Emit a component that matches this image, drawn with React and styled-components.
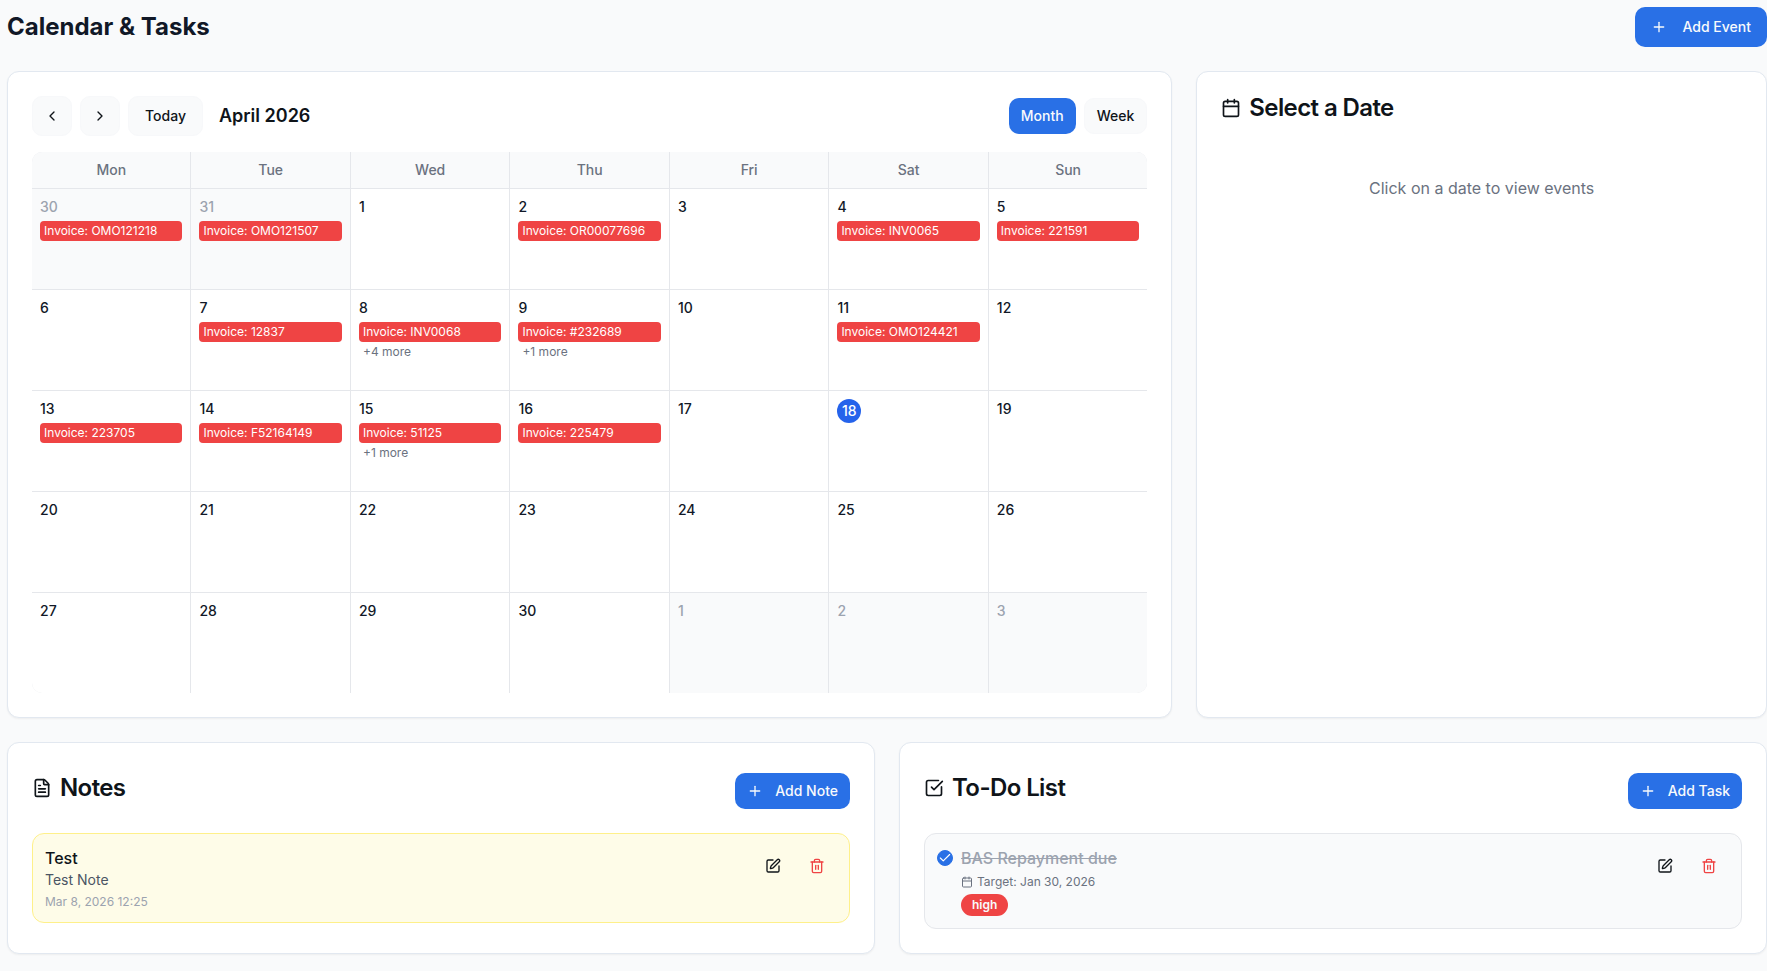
import { Calendar, ChevronLeft, ChevronRight, FileText, Plus, SquareCheckBig, SquarePen, Trash2 } from "lucide-react";
import { useState } from "react";
import styled, { createGlobalStyle } from "styled-components";

const GlobalStyle = createGlobalStyle`
  *, *::before, *::after {
    box-sizing: border-box;
  }
  body {
    margin: 0;
    background-color: #f9fafb;
    color: #0f1419;
    font-family: Inter, "Liberation Sans", sans-serif;
    font-size: 16px;
    line-height: 24px;
  }
  h1, h2, h3, p {
    margin: 0;
  }
`;

const Page = styled.main`
  display: flex;
  flex-direction: column;
  gap: 24px;
  padding: 7px 0 16px 7px;
`;
const Header = styled.header`
  display: flex;
  align-items: center;
  justify-content: space-between;
`;
const PageTitle = styled.h1`
  color: #111827;
  font-size: 24px;
  font-weight: 700;
  line-height: 32px;
`;
const Button = styled.button`
  display: inline-flex;
  align-items: center;
  justify-content: center;
  gap: ${(props) => (props.$small ? "12px" : "16px")};
  height: ${(props) => (props.$small ? "36px" : "40px")};
  padding: 0 ${(props) => (props.$small ? "12px" : "16px")};
  border: ${(props) => (props.$primary ? "none" : "1px solid #f7f8fa")};
  border-radius: 10px;
  background-color: ${(props) => (props.$primary ? "#2970e6" : "#f9fafb")};
  color: ${(props) => (props.$primary ? "#f8fafc" : "#0f1419")};
  font-family: inherit;
  font-size: 14px;
  font-weight: 500;
  line-height: 20px;
  white-space: nowrap;
  cursor: pointer;
`;
const SquareButton = styled(Button)`
  width: 40px;
  padding: 0;
`;
const IconButton = styled.button`
  display: flex;
  align-items: center;
  justify-content: center;
  width: 40px;
  height: 40px;
  padding: 0;
  border: none;
  background: transparent;
  color: ${(props) => (props.$danger ? "#ef4444" : "#0f1419")};
  cursor: pointer;
`;

const TopGrid = styled.div`
  display: grid;
  grid-template-columns: repeat(3, minmax(0, 1fr));
  gap: 24px;
`;
const BottomGrid = styled.div`
  display: grid;
  grid-template-columns: repeat(2, minmax(0, 1fr));
  gap: 24px;
`;
const Card = styled.section`
  grid-column: ${(props) => (props.$wide ? "span 2" : "auto")};
  padding: 24px;
  border: 1px solid #e2e8f0;
  border-radius: 12px;
  background-color: #fff;
  box-shadow: 0 1px 2px rgba(0, 0, 0, 0.05);
`;
const CardHeader = styled.div`
  display: flex;
  align-items: center;
  justify-content: space-between;
  margin-bottom: 24px;

  ${Button} {
    margin-top: 6px;
  }
`;
const CardTitle = styled.h2`
  display: flex;
  align-items: center;
  gap: 8px;
  font-size: 24px;
  font-weight: 600;
  line-height: 24px;
  letter-spacing: -0.025em;
`;
const Empty = styled.p`
  padding: 32px 0;
  color: #6b7280;
  text-align: center;
`;

const Toolbar = styled.div`
  display: flex;
  align-items: center;
  justify-content: space-between;
  margin-bottom: 16px;
`;
const Group = styled.div`
  display: flex;
  align-items: center;
  gap: 8px;
`;
const MonthTitle = styled.h3`
  margin-left: 8px;
  font-size: 18px;
  font-weight: 600;
  line-height: 28px;
`;
/* the 1px gaps show the table background as grid lines */
const MonthTable = styled.table`
  display: grid;
  gap: 1px;
  border-radius: 10px;
  background-color: #e5e7eb;
  overflow: hidden;

  tbody {
    display: grid;
    gap: 1px;
  }
  tr {
    display: grid;
    grid-template-columns: repeat(7, minmax(0, 1fr));
    gap: 1px;
  }
`;
const DayName = styled.th`
  padding: 8px;
  background-color: #f9fafb;
  color: #6b7280;
  font-size: 14px;
  font-weight: 500;
  line-height: 20px;
`;
const Day = styled.td`
  min-height: 100px;
  padding: 8px;
  background-color: ${(props) => (props.$outside ? "#f9fafb" : "#fff")};
  color: ${(props) => (props.$outside ? "#9ca3af" : "#111827")};
  cursor: pointer;
`;
const DayNumber = styled.div`
  margin-bottom: 4px;
  font-size: 14px;
  font-weight: 500;
  line-height: 20px;
`;
const TodayNumber = styled(DayNumber)`
  display: flex;
  align-items: center;
  justify-content: center;
  width: 24px;
  height: 24px;
  border-radius: 50%;
  background-color: #2563eb;
  color: #fff;
`;
const EventChip = styled.div`
  padding: 2px 4px;
  border-radius: 4px;
  background-color: #ef4444;
  color: #fff;
  font-size: 12px;
  line-height: 16px;
  white-space: nowrap;
  overflow: hidden;
  text-overflow: ellipsis;
`;
const More = styled.div`
  padding: 2px 4px;
  color: #6b7280;
  font-size: 12px;
  line-height: 16px;
`;

const Item = styled.article`
  display: flex;
  align-items: flex-start;
  gap: 8px;
  padding: 12px;
  border: 1px solid ${(props) => (props.$note ? "#fef08a" : "#e5e7eb")};
  border-radius: 12px;
  background-color: ${(props) => (props.$note ? "#fefce8" : "#f9fafb")};
`;
const ItemBody = styled.div`
  flex: 1;
  min-width: 0;
`;
const ItemTitle = styled.h3`
  font-size: 16px;
  font-weight: 500;
  line-height: 24px;
  color: ${(props) => (props.$done ? "#9ca3af" : "inherit")};
  text-decoration: ${(props) => (props.$done ? "line-through" : "none")};
`;
const NoteText = styled.p`
  color: #4b5563;
  font-size: 14px;
  line-height: 20px;
`;
const Meta = styled.p`
  display: flex;
  align-items: center;
  gap: 4px;
  margin-top: 4px;
  color: ${(props) => (props.$light ? "#9ca3af" : "#6b7280")};
  font-size: 12px;
  line-height: 16px;
`;
const Badge = styled.span`
  display: block;
  width: fit-content;
  margin-top: 4px;
  padding: 3px 11px;
  border-radius: 11px;
  background-color: #ef4444;
  color: #f8fafc;
  font-size: 12px;
  font-weight: 600;
  line-height: 16px;
`;
const Actions = styled.div`
  display: flex;
  gap: 4px;
`;
const Checkbox = styled.input`
  appearance: none;
  flex: none;
  width: 16px;
  height: 16px;
  margin: 4px 0 0;
  border: 1px solid #2970e6;
  border-radius: 50%;
  background-color: #fff;
  cursor: pointer;

  &:checked {
    background: #2970e6 url("data:image/svg+xml,%3Csvg xmlns='http://www.w3.org/2000/svg' viewBox='0 0 24 24' fill='none' stroke='white' stroke-width='2' stroke-linecap='round' stroke-linejoin='round'%3E%3Cpath d='M20 6 9 17l-5-5'/%3E%3C/svg%3E") center / 14px no-repeat;
  }
`;

const dayNames = ["Mon", "Tue", "Wed", "Thu", "Fri", "Sat", "Sun"];

const events = {
  "3-30": { title: "Invoice: OMO121218" },
  "3-31": { title: "Invoice: OMO121507" },
  "4-2": { title: "Invoice: OR00077696" },
  "4-4": { title: "Invoice: INV0065" },
  "4-5": { title: "Invoice: 221591" },
  "4-7": { title: "Invoice: 12837" },
  "4-8": { title: "Invoice: INV0068", more: 4 },
  "4-9": { title: "Invoice: #232689", more: 1 },
  "4-11": { title: "Invoice: OMO124421" },
  "4-13": { title: "Invoice: 223705" },
  "4-14": { title: "Invoice: F52164149" },
  "4-15": { title: "Invoice: 51125", more: 1 },
  "4-16": { title: "Invoice: 225479" },
};

// five weeks, starting on Monday 30 March 2026
const weeks = [0, 1, 2, 3, 4].map((week) =>
  dayNames.map((_, index) => {
    const date = new Date(2026, 2, 30 + week * 7 + index);
    return { month: date.getMonth() + 1, day: date.getDate() };
  })
);

const DayCell = ({ month, day }) => {
  const event = events[`${month}-${day}`];
  const Number = month === 4 && day === 18 ? TodayNumber : DayNumber;

  return (
    <Day $outside={month !== 4}>
      <Number>{day}</Number>
      {event && <EventChip>{event.title}</EventChip>}
      {event?.more && <More>{`+${event.more} more`}</More>}
    </Day>
  );
};

const ItemActions = ({ name }) => (
  <Actions>
    <IconButton aria-label={`Edit ${name}`}>
      <SquarePen size={16} />
    </IconButton>
    <IconButton $danger aria-label={`Delete ${name}`}>
      <Trash2 size={16} />
    </IconButton>
  </Actions>
);

const App = () => {
  const [view, setView] = useState("month");
  const [done, setDone] = useState(true);

  return (
    <>
      <GlobalStyle />
      <Page>
        <Header>
          <PageTitle>Calendar &amp; Tasks</PageTitle>
          <Button $primary>
            <Plus size={16} />
            Add Event
          </Button>
        </Header>

        <TopGrid>
          <Card $wide>
            <Toolbar>
              <Group>
                <SquareButton aria-label="Previous month">
                  <ChevronLeft size={16} />
                </SquareButton>
                <SquareButton aria-label="Next month">
                  <ChevronRight size={16} />
                </SquareButton>
                <Button>Today</Button>
                <MonthTitle>April 2026</MonthTitle>
              </Group>
              <Group>
                <Button $small $primary={view === "month"} onClick={() => setView("month")}>
                  Month
                </Button>
                <Button $small $primary={view === "week"} onClick={() => setView("week")}>
                  Week
                </Button>
              </Group>
            </Toolbar>
            <MonthTable>
              <thead>
                <tr>
                  {dayNames.map((name) => (
                    <DayName key={name} scope="col">{name}</DayName>
                  ))}
                </tr>
              </thead>
              <tbody>
                {weeks.map((week) => (
                  <tr key={`${week[0].month}-${week[0].day}`}>
                    {week.map((date) => (
                      <DayCell key={date.day} {...date} />
                    ))}
                  </tr>
                ))}
              </tbody>
            </MonthTable>
          </Card>

          <Card>
            <CardHeader>
              <CardTitle>
                <Calendar size={20} />
                Select a Date
              </CardTitle>
            </CardHeader>
            <Empty>Click on a date to view events</Empty>
          </Card>
        </TopGrid>

        <BottomGrid>
          <Card>
            <CardHeader>
              <CardTitle>
                <FileText size={20} />
                Notes
              </CardTitle>
              <Button $small $primary>
                <Plus size={16} />
                Add Note
              </Button>
            </CardHeader>
            <Item $note>
              <ItemBody>
                <ItemTitle>Test</ItemTitle>
                <NoteText>Test Note</NoteText>
                <Meta $light>Mar 8, 2026 12:25</Meta>
              </ItemBody>
              <ItemActions name="note" />
            </Item>
          </Card>

          <Card>
            <CardHeader>
              <CardTitle>
                <SquareCheckBig size={20} />
                To-Do List
              </CardTitle>
              <Button $small $primary>
                <Plus size={16} />
                Add Task
              </Button>
            </CardHeader>
            <Item>
              <Checkbox
                id="task-1"
                type="checkbox"
                checked={done}
                onChange={(e) => setDone(e.target.checked)}
              />
              <ItemBody>
                <ItemTitle $done={done}>
                  <label htmlFor="task-1">BAS Repayment due</label>
                </ItemTitle>
                <Meta>
                  <Calendar size={12} />
                  Target: Jan 30, 2026
                </Meta>
                <Badge>high</Badge>
              </ItemBody>
              <ItemActions name="task" />
            </Item>
          </Card>
        </BottomGrid>
      </Page>
    </>
  );
};

export default App;
